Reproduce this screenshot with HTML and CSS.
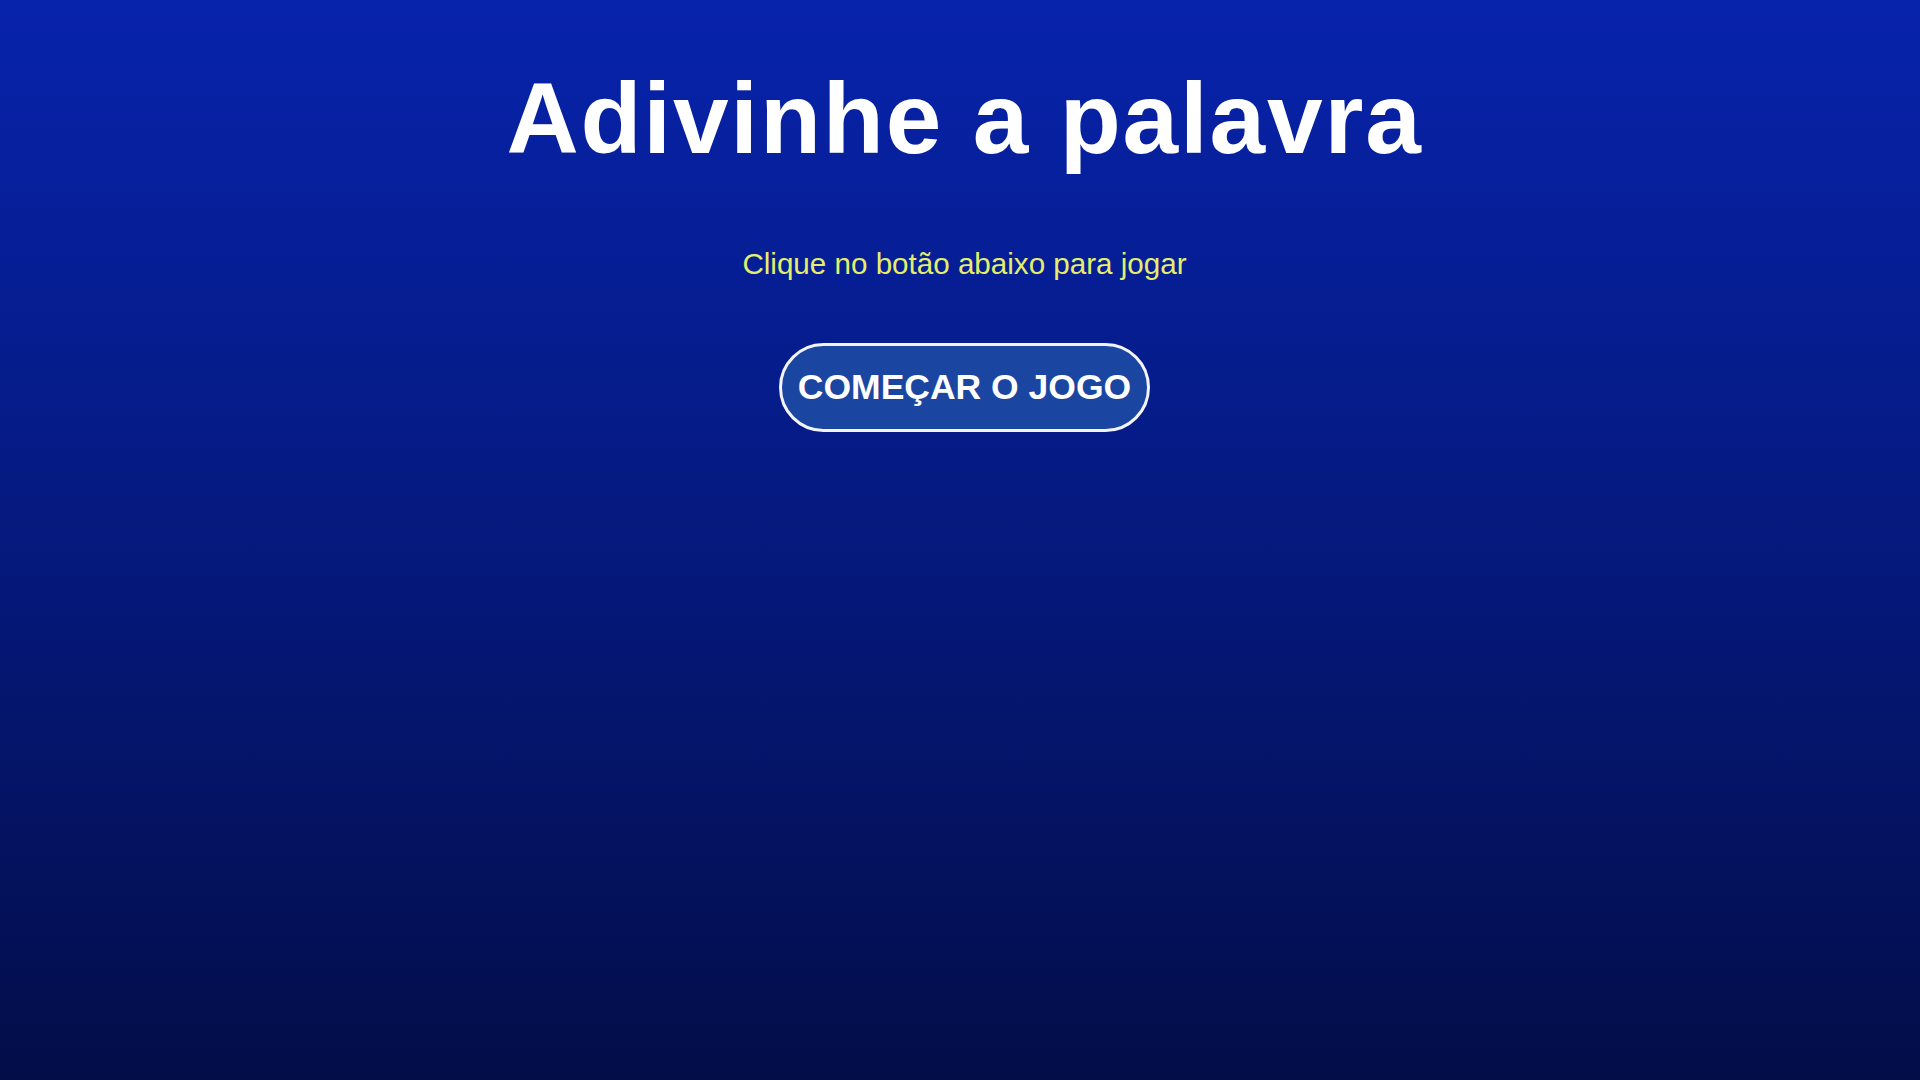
FILE: index.html
```html
<!DOCTYPE html>
<html lang="pt">
<head>
<meta charset="utf-8">
<title>Adivinhe a palavra</title>
<link rel="stylesheet" href="styles.css">
</head>
<body>
<main class="screen">
  <h1 class="title">Adivinhe a palavra</h1>
  <p class="hint">Clique no botão abaixo para jogar</p>
  <button class="start-btn" type="button">COMEÇAR O JOGO</button>
</main>
</body>
</html>
```

FILE: styles.css
```css
html, body {
  margin: 0;
  padding: 0;
  height: 100%;
}

body {
  background: linear-gradient(to bottom, #0723ab 0%, #05197e 50%, #030d48 100%);
  font-family: "Liberation Sans", Arial, sans-serif;
}

.screen {
  min-height: 100vh;
  box-sizing: border-box;
  display: flex;
  flex-direction: column;
  align-items: center;
  padding: 68px 0 0 9px;
}

.title {
  margin: 0;
  font-size: 100px;
  line-height: 1;
  letter-spacing: 1.8px;
  font-weight: 700;
  color: #ffffff;
}

.hint {
  margin: 81px 0 0;
  font-size: 29.6px;
  line-height: 1;
  color: #e4ee6c;
}

.start-btn {
  margin-top: 64px;
  font-family: "Liberation Sans", Arial, sans-serif;
  font-size: 35.5px;
  line-height: 1;
  font-weight: 700;
  color: #ffffff;
  background: #1a45a0;
  border: 3px solid #f2f4fa;
  border-radius: 50px;
  padding: 24px 15.5px;
  cursor: pointer;
}
```
